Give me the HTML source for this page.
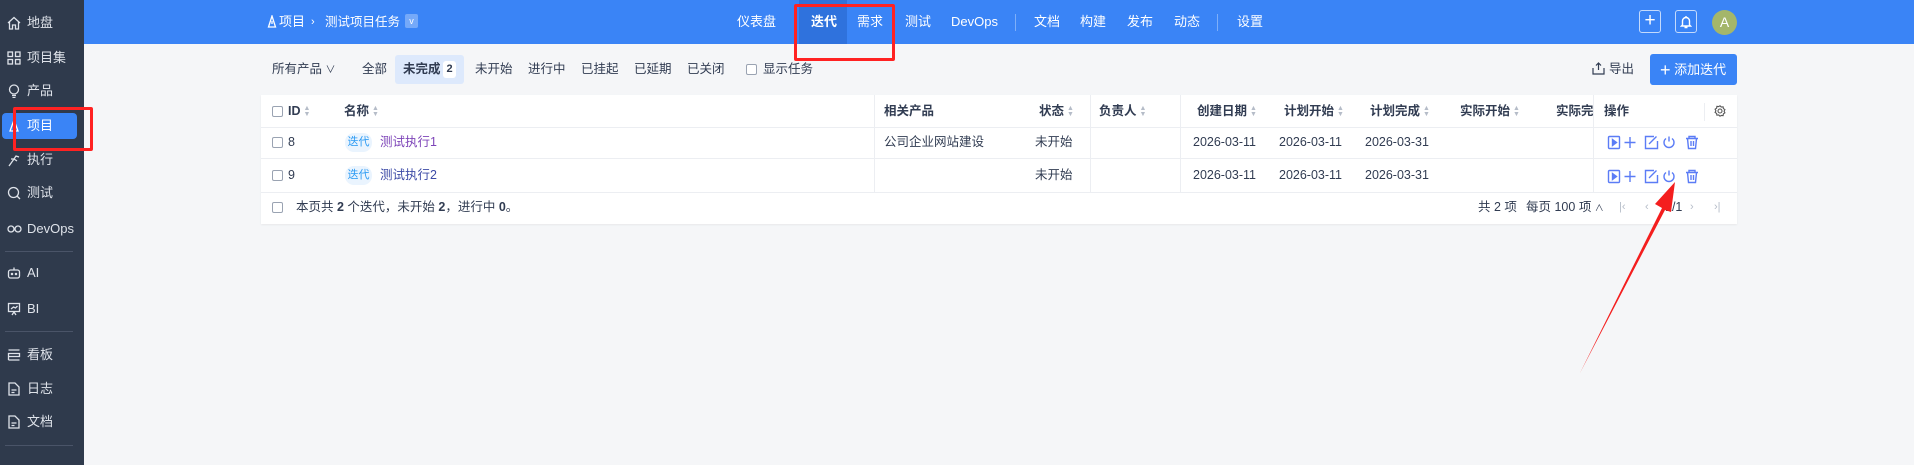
<!DOCTYPE html>
<html><head><meta charset="utf-8"><style>
*{box-sizing:border-box;margin:0;padding:0}
body{width:1914px;height:465px;overflow:hidden;background:#f5f6f8;font-family:"Liberation Sans","Noto Sans CJK SC",sans-serif;font-size:13px;color:#313c52;position:relative}
.abs{position:absolute;white-space:nowrap}
#side{position:absolute;left:0;top:0;width:84px;height:465px;background:#2f3a4c}
.si{position:absolute;left:0;width:84px;height:26px;line-height:26px;color:#dfe3ea;font-size:13px}
.si span{position:absolute;left:27px}
.si svg{position:absolute;left:7px;top:6px}
.sep{position:absolute;left:5px;width:68px;height:1px;background:#4a5468}
#hdr{position:absolute;left:84px;top:0;width:1830px;height:44px;background:#3a84f6;color:#fff}
.nv{position:absolute;top:0;height:44px;line-height:44px;color:#fff;font-size:13px;white-space:nowrap}
.vs{position:absolute;top:14px;width:1px;height:17px;background:rgba(255,255,255,.35)}
.fi{position:absolute;top:59px;line-height:20px;font-size:12.5px;color:#313c52;white-space:nowrap}
.card{position:absolute;left:261px;top:95px;width:1476px;height:129px;background:#fff;box-shadow:0 1px 2px rgba(0,0,0,.06)}
.hl{position:absolute;left:0;width:1476px;height:1px;background:#eceef2}
.vl{position:absolute;width:1px;background:#eceef2}
.th{position:absolute;top:0;height:32px;line-height:32px;font-weight:bold;font-size:12.5px;color:#313c52;white-space:nowrap}
.td{position:absolute;line-height:20px;font-size:12.5px;white-space:nowrap}
.cb{position:absolute;width:11px;height:11px;border:1px solid #9aa3b2;border-radius:2px;background:#fff}
.sort{display:inline-block;width:7px;margin-left:3px;vertical-align:middle;color:#b5bcc8;font-size:7px;line-height:6px}
</style></head><body>
<div id="side">
 <div class="si" style="top:10px"><svg width="14" height="14" viewBox="0 0 14 14" fill="none" stroke="#dfe3ea" stroke-width="1.3"><path d="M1 7L7 1.5 13 7M2.5 5.5V13H5.5V9H8.5V13H11.5V5.5"/></svg><span>地盘</span></div>
 <div class="si" style="top:45px"><svg width="14" height="14" viewBox="0 0 14 14" fill="none" stroke="#dfe3ea" stroke-width="1.3"><rect x="1" y="1" width="4.5" height="4.5"/><rect x="8.5" y="1" width="4.5" height="4.5"/><rect x="1" y="8.5" width="4.5" height="4.5"/><rect x="8.5" y="8.5" width="4.5" height="4.5"/></svg><span>项目集</span></div>
 <div class="si" style="top:78px"><svg width="14" height="14" viewBox="0 0 14 14" fill="none" stroke="#dfe3ea" stroke-width="1.3"><circle cx="7" cy="5.5" r="4.5"/><path d="M5 11.5h4M5.5 13.5h3"/></svg><span>产品</span></div>
 <div style="position:absolute;left:2px;top:113px;width:75px;height:26px;background:#3a84f6;border-radius:4px"></div>
 <div class="si" style="top:113px;color:#fff"><svg width="14" height="14" viewBox="0 0 14 14" fill="none" stroke="#fff" stroke-width="1.3"><path d="M7 1L3 12h8z M7 6v4"/></svg><span>项目</span></div>
 <div class="si" style="top:147px"><svg width="14" height="14" viewBox="0 0 14 14" fill="none" stroke="#dfe3ea" stroke-width="1.3"><path d="M2 13L7 6l3 2M7 6l2-3 3 1M4 6l3 0"/></svg><span>执行</span></div>
 <div class="si" style="top:180px"><svg width="14" height="14" viewBox="0 0 14 14" fill="none" stroke="#dfe3ea" stroke-width="1.3"><circle cx="6.5" cy="6.5" r="5"/><path d="M10 10l3 3"/></svg><span>测试</span></div>
 <div class="si" style="top:216px"><svg width="16" height="14" viewBox="0 0 16 14" fill="none" stroke="#dfe3ea" stroke-width="1.3"><circle cx="4" cy="7" r="3"/><circle cx="11" cy="7" r="3"/></svg><span style="left:27px">DevOps</span></div>
 <div class="sep" style="top:251px"></div>
 <div class="si" style="top:260px"><svg width="14" height="14" viewBox="0 0 14 14" fill="none" stroke="#dfe3ea" stroke-width="1.3"><rect x="1.5" y="4" width="11" height="8" rx="2"/><path d="M7 1.5v2.5"/><circle cx="5" cy="8" r=".6"/><circle cx="9" cy="8" r=".6"/></svg><span>AI</span></div>
 <div class="si" style="top:296px"><svg width="14" height="14" viewBox="0 0 14 14" fill="none" stroke="#dfe3ea" stroke-width="1.3"><rect x="1.5" y="1.5" width="11" height="8"/><path d="M4 7l2.5-2 2 1 2-2M5 13l2-3 2 3"/></svg><span>BI</span></div>
 <div class="sep" style="top:331px"></div>
 <div class="si" style="top:342px"><svg width="14" height="14" viewBox="0 0 14 14" fill="none" stroke="#dfe3ea" stroke-width="1.3"><path d="M1.5 2h11M1.5 5.5h11v3h-11zM1.5 12h11M1.5 8.5V12"/></svg><span>看板</span></div>
 <div class="si" style="top:376px"><svg width="14" height="14" viewBox="0 0 14 14" fill="none" stroke="#dfe3ea" stroke-width="1.3"><path d="M2 1h6l4 4v8H2zM4.5 8h5M4.5 10.5h3"/></svg><span>日志</span></div>
 <div class="si" style="top:409px"><svg width="14" height="14" viewBox="0 0 14 14" fill="none" stroke="#dfe3ea" stroke-width="1.3"><path d="M2 1h6l4 4v8H2zM4.5 8h5M4.5 10.5h3"/></svg><span>文档</span></div>
 <div class="sep" style="top:445px"></div>
</div>
<div id="hdr">
 <svg class="abs" style="left:183px;top:15px" width="10" height="13" viewBox="0 0 10 13" fill="none" stroke="#fff" stroke-width="1.3"><path d="M5 1L1.5 12h7zM5 6v3"/></svg>
 <div class="nv" style="left:195px">项目</div>
 <div class="nv" style="left:227px;font-size:11px">›</div>
 <div class="nv" style="left:241px;font-size:12.5px">测试项目任务</div>
 <div style="position:absolute;left:321px;top:14px;width:13px;height:14px;background:rgba(255,255,255,.3);border-radius:2px;color:#fff;font-size:9px;line-height:14px;text-align:center">v</div>
 <div class="nv" style="left:653px">仪表盘</div>
 <div style="position:absolute;left:715px;top:0;width:48px;height:44px;background:#2f72dd"></div>
 <div class="nv" style="left:727px;font-weight:bold">迭代</div>
 <div class="nv" style="left:773px">需求</div>
 <div class="nv" style="left:821px">测试</div>
 <div class="nv" style="left:867px">DevOps</div>
 <div class="vs" style="left:931px"></div>
 <div class="nv" style="left:950px">文档</div>
 <div class="nv" style="left:996px">构建</div>
 <div class="nv" style="left:1043px">发布</div>
 <div class="nv" style="left:1090px">动态</div>
 <div class="vs" style="left:1133px"></div>
 <div class="nv" style="left:1153px">设置</div>
 <div style="position:absolute;left:1555px;top:10px;width:22px;height:23px;border:1px solid rgba(255,255,255,.7);border-radius:3px;color:#fff;text-align:center;line-height:20px;font-size:19px">+</div>
 <div style="position:absolute;left:1591px;top:10px;width:22px;height:23px;border:1px solid rgba(255,255,255,.7);border-radius:3px"><svg style="position:absolute;left:4px;top:4px" width="12" height="14" viewBox="0 0 12 14" fill="none" stroke="#fff" stroke-width="1.4"><path d="M6 1v1.5M2.5 10V6a3.5 3.5 0 017 0v4l1 1H1.5zM4.5 12.5h3"/></svg></div>
 <div style="position:absolute;left:1628px;top:10px;width:25px;height:25px;border-radius:50%;background:#a4b66a;color:#fff;text-align:center;line-height:25px;font-size:14px">A</div>
</div>
<div class="fi" style="left:272px">所有产品 <span style="font-size:10px">∨</span></div>
<div class="fi" style="left:362px">全部</div>
<div style="position:absolute;left:395px;top:55px;width:69px;height:29px;background:#dde9fc;border-radius:3px"></div>
<div class="fi" style="left:403px;font-weight:bold">未完成</div>
<div style="position:absolute;left:443px;top:61px;width:13px;height:17px;background:#fff;border-radius:3px;text-align:center;line-height:17px;font-size:11px;font-weight:bold">2</div>
<div class="fi" style="left:475px">未开始</div>
<div class="fi" style="left:528px">进行中</div>
<div class="fi" style="left:581px">已挂起</div>
<div class="fi" style="left:634px">已延期</div>
<div class="fi" style="left:687px">已关闭</div>
<div class="cb" style="left:746px;top:64px"></div>
<div class="fi" style="left:763px">显示任务</div>
<svg class="abs" style="left:1592px;top:62px" width="13" height="13" viewBox="0 0 13 13" fill="none" stroke="#313c52" stroke-width="1.2"><path d="M6.5 1v7M4 3.5l2.5-2.5 2.5 2.5M1 6v6h11V6"/></svg>
<div class="fi" style="left:1609px">导出</div>
<div style="position:absolute;left:1650px;top:54px;width:87px;height:31px;background:#3a84f6;border-radius:3px;color:#fff;line-height:31px;font-size:13px;padding-left:10px;white-space:nowrap"><span style="font-size:18px;vertical-align:-2px">+</span> 添加迭代</div>

<div class="card">
 <div class="hl" style="top:32px"></div><div class="hl" style="top:63px"></div><div class="hl" style="top:97px"></div>
 <div class="vl" style="left:613px;top:0;height:97px"></div>
 <div class="vl" style="left:829px;top:0;height:97px"></div>
 <div class="vl" style="left:919px;top:0;height:97px"></div>
 <div class="vl" style="left:1332px;top:0;height:97px"></div>
 <div class="vl" style="left:1443px;top:8px;height:18px"></div>
 <div class="cb" style="left:11px;top:11px"></div>
 <div class="th" style="left:27px">ID<span class="sort">▲<br>▼</span></div>
 <div class="th" style="left:83px">名称<span class="sort">▲<br>▼</span></div>
 <div class="th" style="left:623px">相关产品</div>
 <div class="th" style="left:778px">状态<span class="sort">▲<br>▼</span></div>
 <div class="th" style="left:838px">负责人<span class="sort">▲<br>▼</span></div>
 <div class="th" style="left:936px">创建日期<span class="sort">▲<br>▼</span></div>
 <div class="th" style="left:1023px">计划开始<span class="sort">▲<br>▼</span></div>
 <div class="th" style="left:1109px">计划完成<span class="sort">▲<br>▼</span></div>
 <div class="th" style="left:1199px">实际开始<span class="sort">▲<br>▼</span></div>
 <div class="th" style="left:1295px;width:37px;overflow:hidden">实际完成</div>
 <div class="th" style="left:1343px">操作</div>
 <svg class="abs" style="left:1453px;top:10px" width="12" height="12" viewBox="0 0 12 12" fill="none" stroke="#555" stroke-width="1.1"><circle cx="6" cy="6" r="2"/><path d="M6 .8l1.3 1.2 1.8-.2.3 1.8 1.5 1-.8 1.6.8 1.6-1.5 1-.3 1.8-1.8-.2L6 11.2 4.7 10l-1.8.2-.3-1.8-1.5-1 .8-1.6-.8-1.6 1.5-1 .3-1.8 1.8.2z"/></svg>

 <div class="cb" style="left:11px;top:42px"></div>
 <div class="td" style="left:27px;top:37px">8</div>
 <div style="position:absolute;left:84px;top:38px;width:27px;height:19px;background:#eaf4fe;border-radius:9px;color:#2b9af3;font-size:11px;line-height:19px;text-align:center">迭代</div>
 <div class="td" style="left:119px;top:37px;color:#7d44b8">测试执行1</div>
 <div class="td" style="left:623px;top:37px">公司企业网站建设</div>
 <div class="td" style="left:774px;top:37px">未开始</div>
 <div class="td" style="left:932px;top:37px">2026-03-11</div>
 <div class="td" style="left:1018px;top:37px">2026-03-11</div>
 <div class="td" style="left:1104px;top:37px">2026-03-31</div>

 <div class="cb" style="left:11px;top:75px"></div>
 <div class="td" style="left:27px;top:70px">9</div>
 <div style="position:absolute;left:84px;top:71px;width:27px;height:19px;background:#eaf4fe;border-radius:9px;color:#2b9af3;font-size:11px;line-height:19px;text-align:center">迭代</div>
 <div class="td" style="left:119px;top:70px;color:#3c4aa6">测试执行2</div>
 <div class="td" style="left:774px;top:70px">未开始</div>
 <div class="td" style="left:932px;top:70px">2026-03-11</div>
 <div class="td" style="left:1018px;top:70px">2026-03-11</div>
 <div class="td" style="left:1104px;top:70px">2026-03-31</div>

 <div class="cb" style="left:11px;top:107px"></div>
 <div class="td" style="left:35px;top:102px">本页共 <b>2</b> 个迭代，未开始 <b>2</b>，进行中 <b>0</b>。</div>
 <div class="td" style="left:1217px;top:102px">共 2 项</div>
 <div class="td" style="left:1265px;top:102px">每页 <span>100</span> 项 <span style="font-size:9px">∧</span></div>
 <div class="td" style="left:1358px;top:102px;color:#b5bcc8;font-size:11px">|‹</div>
 <div class="td" style="left:1384px;top:102px;color:#b5bcc8;font-size:11px">‹</div>
 <div class="td" style="left:1404px;top:102px">1/1</div>
 <div class="td" style="left:1429px;top:102px;color:#b5bcc8;font-size:11px">›</div>
 <div class="td" style="left:1453px;top:102px;color:#b5bcc8;font-size:11px">›|</div>
</div>

<svg class="abs" style="left:1607px;top:135px" width="100" height="50" viewBox="0 0 100 50" fill="none" stroke="#5b7cf6" stroke-width="1.4">
 <g><rect x="1.5" y="1.5" width="11" height="12" rx="1"/><path d="M5.5 4.5l4 3-4 3z" fill="#5b7cf6"/>
 <path d="M23 2v11M17.5 7.5h11"/>
 <path d="M47 1.5h-8.5v12h12V6M42 9l7.5-7.5"/>
 <path d="M62 1.5v5M59 3.5a5 5 0 106 0"/>
 <path d="M79 3.5h12M82 3.5V1.5h6v2M80.5 3.5l1 10h7l1-10M84 6v5M86.5 6v5"/></g>
 <g transform="translate(0,34)"><rect x="1.5" y="1.5" width="11" height="12" rx="1"/><path d="M5.5 4.5l4 3-4 3z" fill="#5b7cf6"/>
 <path d="M23 2v11M17.5 7.5h11"/>
 <path d="M47 1.5h-8.5v12h12V6M42 9l7.5-7.5"/>
 <path d="M62 1.5v5M59 3.5a5 5 0 106 0"/>
 <path d="M79 3.5h12M82 3.5V1.5h6v2M80.5 3.5l1 10h7l1-10M84 6v5M86.5 6v5"/></g>
</svg>

<div style="position:absolute;left:13px;top:107px;width:80px;height:44px;border:3px solid #f22;border-radius:2px"></div>
<div style="position:absolute;left:794px;top:4px;width:101px;height:57px;border:3px solid #f22;border-radius:2px"></div>
<svg class="abs" style="left:0;top:0" width="1914" height="465"><path d="M1580 373 L1662 208 L1655 204 L1675 182 L1671 212 L1665 210 Z" fill="#f41e1e"/></svg>
</body></html>
